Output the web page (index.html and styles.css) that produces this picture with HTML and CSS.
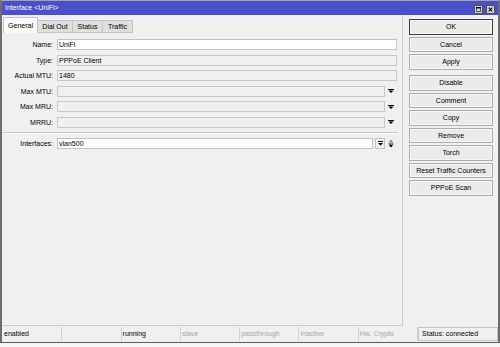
FILE: index.html
```html
<!DOCTYPE html>
<html lang="en">
<head>
  <meta charset="UTF-8">
  <title>Interface &lt;UniFi&gt;</title>
  <link rel="stylesheet" href="styles.css">
</head>
<body>
  <div class="window">
    <div class="titlebar">
      <span class="title">Interface &lt;UniFi&gt;</span>
      <div class="title-buttons">
        <span class="tb-btn">
          <svg width="7" height="7" viewBox="0 0 7 7"><path d="M0.5 0.5h6v6h-6z" fill="none" stroke="#000"/><path d="M0 0h7v2H0z" fill="#000"/></svg>
        </span>
        <span class="tb-btn">
          <svg width="7" height="7" viewBox="0 0 7 7"><path d="M1 1l5 5M6 1l-5 5" stroke="#000" stroke-width="1.5"/></svg>
        </span>
      </div>
    </div>

    <div class="body">
      <div class="main">
        <div class="tabs">
          <div class="tab active">General</div>
          <div class="tab">Dial Out</div>
          <div class="tab status-tab">Status</div>
          <div class="tab traffic-tab">Traffic</div>
        </div>

        <div class="form">
          <div class="row">
            <label>Name:</label>
            <div class="field edit">UniFi</div>
          </div>
          <div class="row">
            <label>Type:</label>
            <div class="field">PPPoE Client</div>
          </div>
          <div class="row">
            <label>Actual MTU:</label>
            <div class="field">1480</div>
          </div>
          <div class="row">
            <label>Max MTU:</label>
            <div class="field"></div>
            <span class="arrow">
              <svg width="6" height="4" viewBox="0 0 6 4"><path d="M0 0h6v1H0z M0.5 1.5h5L3 4z" fill="#000"/></svg>
            </span>
          </div>
          <div class="row">
            <label>Max MRU:</label>
            <div class="field"></div>
            <span class="arrow">
              <svg width="6" height="4" viewBox="0 0 6 4"><path d="M0 0h6v1H0z M0.5 1.5h5L3 4z" fill="#000"/></svg>
            </span>
          </div>
          <div class="row">
            <label>MRRU:</label>
            <div class="field"></div>
            <span class="arrow">
              <svg width="6" height="4" viewBox="0 0 6 4"><path d="M0 0h6v1H0z M0.5 1.5h5L3 4z" fill="#000"/></svg>
            </span>
          </div>

          <div class="sep"></div>

          <div class="row">
            <label>Interfaces:</label>
            <div class="field edit">vlan500</div>
            <span class="combo-btn">
              <svg width="5" height="5" viewBox="0 0 5 5"><path d="M0 0h5v1H0z M0 2h5L2.5 4.5z" fill="#000"/></svg>
            </span>
            <span class="arrow">
              <svg width="6" height="9" viewBox="0 0 6 9"><path d="M0.5 3.5L3 0.5L5.5 3.5z" fill="#8a8a8a"/><path d="M0.5 4h5v1h-5z" fill="#8a8a8a"/><path d="M0.5 5.5h5L3 8.5z" fill="#000"/></svg>
            </span>
          </div>
        </div>
      </div>

      <div class="side">
        <div class="btn default">OK</div>
        <div class="btn">Cancel</div>
        <div class="btn">Apply</div>
        <div class="btn spaced">Disable</div>
        <div class="btn">Comment</div>
        <div class="btn">Copy</div>
        <div class="btn">Remove</div>
        <div class="btn">Torch</div>
        <div class="btn">Reset Traffic Counters</div>
        <div class="btn">PPPoE Scan</div>
      </div>
    </div>

    <div class="statusbar">
      <div class="panel">enabled</div>
      <div class="panel"></div>
      <div class="panel">running</div>
      <div class="panel muted">slave</div>
      <div class="panel muted">passthrough</div>
      <div class="panel muted">inactive</div>
      <div class="panel muted">Hw. Crypto</div>
      <div class="panel last">Status: connected</div>
    </div>
  </div>
</body>
</html>
```

FILE: styles.css
```css
* {
  margin: 0;
  padding: 0;
  box-sizing: border-box;
}

body {
  width: 500px;
  height: 347px;
  overflow: hidden;
  background: #f6f6f6;
  font-family: 'Liberation Sans', Arial, sans-serif;
  font-size: 7px;
  color: #000;
}

.window {
  width: 500px;
  height: 343px;
  display: flex;
  flex-direction: column;
  background: #f0f0f0;
  border: 2px solid #6e6e6e;
  border-top: 1px solid #a4a4a4;
  border-bottom: 1px solid #5c5c5c;
}

/* title bar */
.titlebar {
  height: 14px;
  display: flex;
  align-items: center;
  justify-content: space-between;
  padding: 0 3px;
  background: #4b4fc8;
  color: #fff;
}

.title {
  line-height: 14px;
}

.title-buttons {
  display: flex;
  gap: 3px;
  padding-top: 3px;
}

.tb-btn {
  width: 9px;
  height: 9px;
  display: flex;
  align-items: center;
  justify-content: center;
  background: #d6d6d6;
  border: 1px solid #505050;
}

.tb-btn svg {
  width: 5px;
  height: 5px;
}

/* body */
.body {
  flex: 1;
  display: flex;
}

.main {
  width: 401px;
  padding-top: 2px;
  border-right: 1px solid #cdcdcd;
  border-bottom: 1px solid #cdcdcd;
}

.tabs {
  height: 16px;
  display: flex;
  align-items: flex-end;
  padding-left: 1px;
}

.tab {
  width: 35px;
  height: 13px;
  line-height: 12px;
  text-align: center;
  background: #dfdfdf;
  border: 1px solid #c4c4c4;
  border-left: none;
}

.tab.active {
  height: 16px;
  line-height: 15px;
  background: #fafafa;
  border-left: 1px solid #c4c4c4;
  border-bottom: none;
}

.status-tab,
.traffic-tab {
  width: 30px;
}

/* form */
.form {
  padding-top: 3.7px;
}

.row {
  height: 15.6px;
  display: flex;
  align-items: center;
  padding-right: 5px;
}

.row label {
  width: 51px;
  margin-right: 4px;
  text-align: right;
  white-space: nowrap;
}

.field {
  flex: 1;
  height: 11px;
  padding-left: 1px;
  line-height: 9px;
  white-space: nowrap;
  background: #f0f0f0;
  border: 1px solid #c8c8c8;
}

.field.edit {
  background: #fff;
  border-color: #c2c2c2;
}

.arrow {
  width: 12px;
  display: flex;
  justify-content: center;
  align-items: center;
}

.combo-btn {
  width: 10px;
  height: 11px;
  margin-left: 2px;
  display: flex;
  align-items: center;
  justify-content: center;
  background: #ededed;
  border: 1px solid #c2c2c2;
}

.sep {
  margin: 1.7px 4px 1.7px 1px;
  border-top: 1px solid #c9c9c9;
  border-bottom: 1px solid #fbfbfb;
}

/* buttons */
.side {
  flex: 1;
  display: flex;
  flex-direction: column;
  gap: 2px;
  padding: 4px 5px 0 6px;
}

.btn {
  height: 15.5px;
  line-height: 13.5px;
  text-align: center;
  white-space: nowrap;
  background: #ebebeb;
  border: 1px solid #adadad;
  box-shadow: inset 0 0 0 1px #f6f6f6;
}

.btn.default {
  border-color: #3e3e3e;
}

.btn.spaced {
  margin-top: 3.5px;
}

/* status bar */
.statusbar {
  height: 16px;
  display: flex;
  padding: 1px 0 1px 1px;
}

.panel {
  width: 59.3px;
  padding-left: 1px;
  line-height: 14px;
  white-space: nowrap;
  overflow: hidden;
  border-right: 1px solid #d2d2d2;
}

.panel.muted {
  color: #a8a8a8;
}

.panel.last {
  flex: 1;
  padding-left: 3px;
  border: 1px solid #c4c4c4;
  line-height: 12px;
}
```
